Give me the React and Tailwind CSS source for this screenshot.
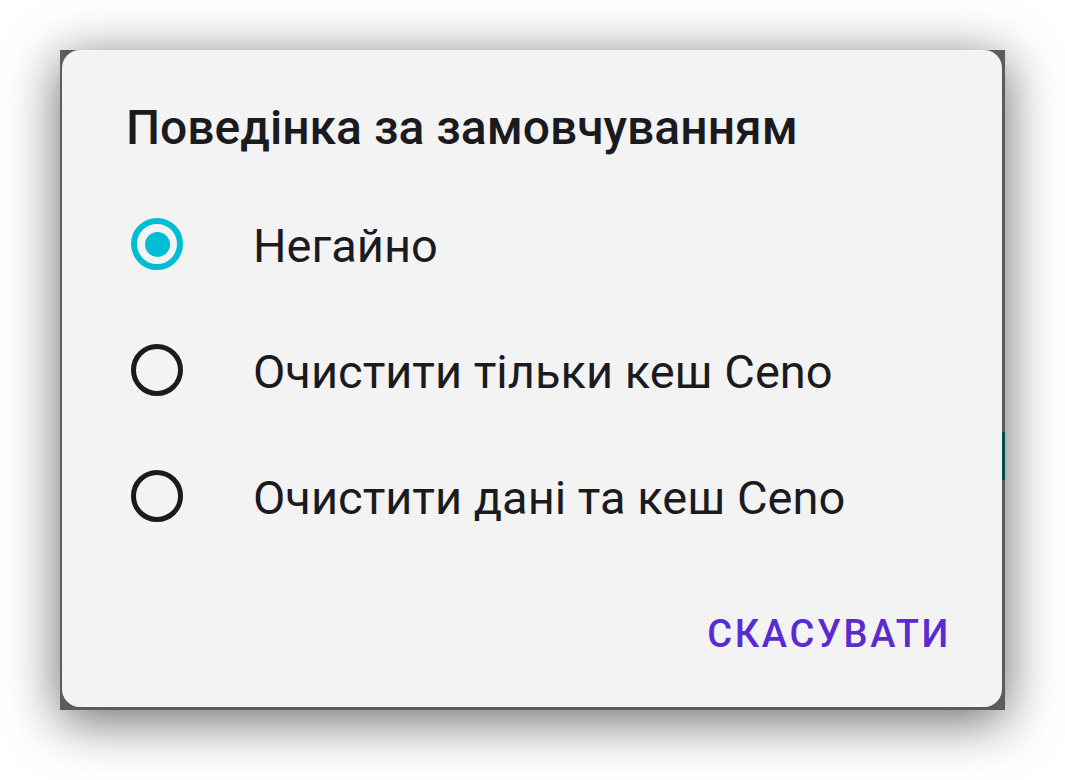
import { useState } from 'react'

const OPTIONS = [
  'Негайно',
  'Очистити тільки кеш Ceno',
  'Очистити дані та кеш Ceno',
]

function Radio({ checked }) {
  if (checked) {
    return (
      <span className="flex h-[52px] w-[52px] shrink-0 items-center justify-center rounded-full border-[6px] border-[#00bcd4]">
        <span className="h-[25px] w-[25px] rounded-full bg-[#00bcd4]" />
      </span>
    )
  }
  return <span className="h-[52px] w-[52px] shrink-0 rounded-full border-[5px] border-[#1b1b1f]" />
}

export default function App() {
  const [selected, setSelected] = useState(0)

  return (
    <div className="h-[780px] w-[1065px] bg-white pl-[60px] pt-[50px]" style={{ fontFamily: 'Roboto, "Noto Sans", sans-serif' }}>
      {/* dimmed app behind the dialog */}
      <div className="flex h-[660px] w-[945px] bg-[#5c5c5c] pb-[3px] pl-[2px] shadow-[0_10px_50px_rgba(0,0,0,0.6)]">
        <div className="flex flex-1 flex-col rounded-[18px] bg-[#f3f3f3] pb-[51px] pt-[50px]">
          <h2 className="pl-[64px] text-[48px] font-medium leading-[56px] text-[#1b1b1f]">
            Поведінка за замовчуванням
          </h2>

          <div className="mt-[25px] flex flex-col">
            {OPTIONS.map((label, i) => (
              <button
                key={label}
                onClick={() => setSelected(i)}
                className="flex h-[126px] items-center pl-[69px] text-left"
              >
                <Radio checked={selected === i} />
                <span className="ml-[70px] pt-[3px] text-[47px] leading-[56px] text-[#1b1b1f]">{label}</span>
              </button>
            ))}
          </div>

          <div className="mt-auto flex justify-end pr-[51px]">
            <button className="text-[38px] font-medium uppercase leading-[44px] tracking-[0.07em] text-[#5a2bd0]">
              Скасувати
            </button>
          </div>
        </div>
        <div className="flex w-[3px] flex-col">
          <div className="mt-[382px] h-[48px] bg-[#004b52]" />
        </div>
      </div>
    </div>
  )
}
